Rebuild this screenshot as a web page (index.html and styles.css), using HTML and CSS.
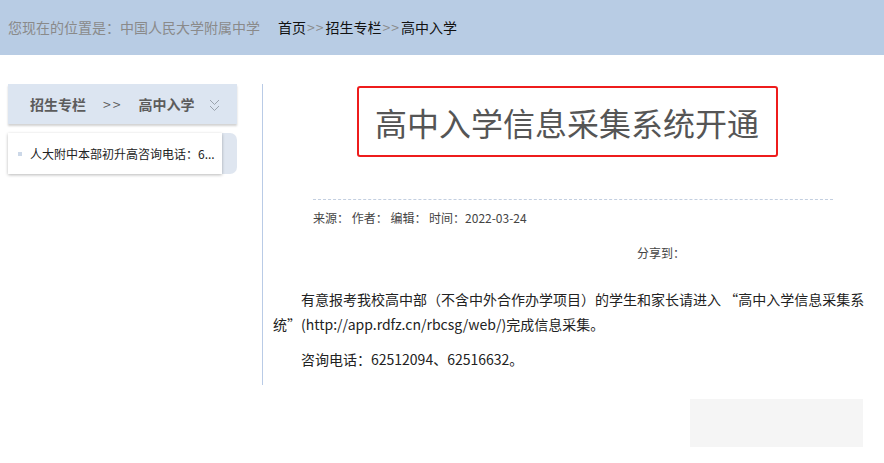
FILE: index.html
```html
<!DOCTYPE html>
<html lang="zh-CN">
<head>
<meta charset="utf-8">
<title>高中入学信息采集系统开通</title>
<link rel="stylesheet" href="styles.css">
</head>
<body>
<div class="topbar">
  <span class="loc">您现在的位置是：中国人民大学附属中学</span>
  <span class="crumbs">首页<span class="gt">&gt;&gt;</span>招生专栏<span class="gt">&gt;&gt;</span>高中入学</span>
</div>
<div class="main">
  <aside class="side">
    <div class="side-head">
      <span>招生专栏</span>
      <span class="sep">&gt;&gt;</span>
      <span>高中入学</span>
      <svg class="chev" width="11" height="13" viewBox="0 0 11 13"><path d="M1 1 L5.5 5.5 L10 1 M1 7 L5.5 11.5 L10 7" fill="none" stroke="#9aa3ad" stroke-width="1"/></svg>
    </div>
    <div class="side-list">
      <div class="side-item"><span class="dot"></span><span class="item-text">人大附中本部初升高咨询电话：6...</span></div>
    </div>
  </aside>
  <section class="content">
    <div class="title-box"><h1>高中入学信息采集系统开通</h1></div>
    <div class="dash"></div>
    <div class="meta">来源： 作者： 编辑： 时间：2022-03-24</div>
    <div class="share">分享到：</div>
    <div class="article">
      <p>有意报考我校高中部（不含中外合作办学项目）的学生和家长请进入 “高中入学信息采集系统”(http://app.rdfz.cn/rbcsg/web/)完成信息采集。</p>
      <p>咨询电话：62512094、62516632。</p>
    </div>
  </section>
</div>
<div class="float-box"></div>
</body>
</html>
```
FILE: styles.css
```css
* { box-sizing: border-box; }
body {
  margin: 0;
  font-family: "Microsoft YaHei", "Noto Sans CJK SC", sans-serif;
  color: #333;
  background: #fff;
}
.topbar {
  height: 55px;
  background: #b8cce4;
  display: flex;
  align-items: center;
  padding: 0 0 2px 8px;
  font-size: 14px;
  line-height: 20px;
}
.loc { color: #8a8a8a; }
.crumbs { color: #111; margin-left: 18px; }
.gt { color: #8a8a8a; padding: 0 1px; letter-spacing: 1px; }

.main {
  display: flex;
  margin-top: 29px;
  padding-left: 8px;
}
.side { width: 229px; flex: none; }
.side-head {
  height: 40px;
  background: #dce5f1;
  box-shadow: 0 2px 2px rgba(0,0,0,0.18);
  display: flex;
  align-items: center;
  padding-left: 22px;
  font-size: 14px;
  font-weight: bold;
  color: #5c5c5c;
}
.side-head .sep { margin: 0 16px 0 17px; font-weight: normal; letter-spacing: 2px; }
.chev { margin-left: 14px; margin-top: 2px; }
.side-list {
  margin-top: 9px;
  background: #dfe6f0;
  border-radius: 0 7px 7px 0;
  padding-right: 15px;
}
.side-item {
  height: 41px;
  background: #fff;
  box-shadow: 0 1px 3px rgba(0,0,0,0.28);
  display: flex;
  align-items: center;
  padding-left: 10px;
  font-size: 12px;
  color: #222;
}
.dot { width: 4px; height: 4px; background: #ccd8e8; margin-right: 8px; }

.content {
  margin-left: 25px;
  border-left: 1px solid #b9cbe6;
  width: 609px;
  padding: 2px 0 13px 10px;
}
.title-box {
  width: 421px;
  height: 71px;
  margin: 0 auto;
  border: 2px solid #ee1c1c;
  border-radius: 3px;
  display: flex;
  align-items: center;
  justify-content: center;
  position: relative;
  left: -5px;
}
.title-box h1 {
  margin: 0;
  font-size: 32px;
  font-weight: normal;
  color: #555;
  line-height: 40px;
}
.dash {
  margin: 42px 0 0 40px;
  width: 520px;
  border-top: 1px dashed #c3cfe0;
}
.meta {
  margin: 10px 0 0 40px;
  font-size: 12px;
  line-height: 16px;
  color: #444;
}
.share {
  margin: 19px 0 0 364px;
  font-size: 12px;
  line-height: 16px;
  color: #444;
}
.article {
  margin-top: 26px;
  font-size: 14px;
  line-height: 25px;
  color: #222;
}
.article p { margin: 0 0 10px; text-indent: 28px; }
.article p:last-child { margin-bottom: 0; }

.float-box {
  width: 173px;
  height: 48px;
  background: #f5f5f5;
  margin: 14px 0 0 690px;
}
```
